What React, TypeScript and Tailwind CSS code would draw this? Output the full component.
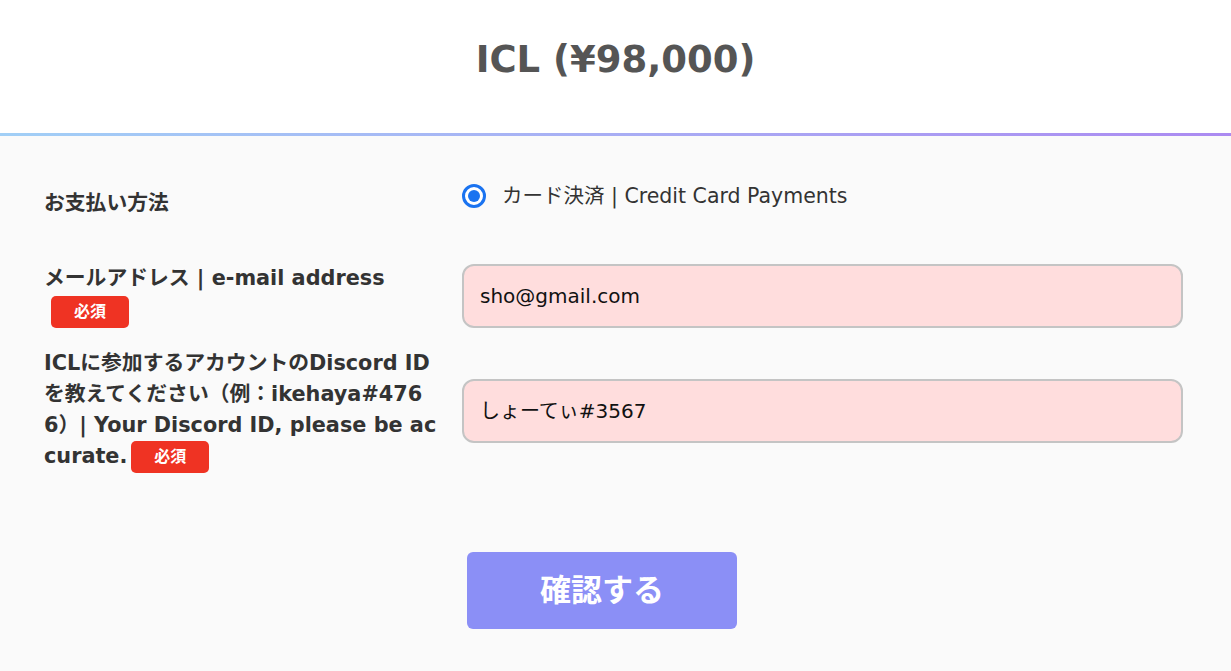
import React from "react";

const font = { fontFamily: '"DejaVu Sans", "Noto Sans CJK JP", sans-serif' };

function Badge() {
  return (
    <span className="inline-flex items-center justify-center w-[78px] h-[32px] rounded-[5px] bg-[#ef3323] text-white text-[16px] font-bold leading-none align-middle">
      必須
    </span>
  );
}

export default function App() {
  return (
    <div className="min-h-screen bg-[#fafafa] text-[#333]" style={font}>
      <header className="bg-white h-[133px] flex items-center justify-center">
        <h1 className="text-[37px] font-bold text-[#555] leading-none -mt-[14px]">ICL (¥98,000)</h1>
      </header>
      <div className="h-[3px] bg-gradient-to-r from-[#a1cff6] to-[#ab8af1]" />
      <main className="pl-[44px] pr-[48px] pt-[44px]">
        <div className="grid grid-cols-[418px_1fr]">
          {/* Row 1 */}
          <div className="pt-[8px] text-[20.8px] font-bold leading-[31px]">お支払い方法</div>
          <div className="flex items-center h-[32px] gap-[16px]">
            <span className="w-[24px] h-[24px] rounded-full border-[3px] border-[#1a73f0] bg-white flex items-center justify-center">
              <span className="w-[12px] h-[12px] rounded-full bg-[#1a73f0]" />
            </span>
            <span className="text-[20.5px] text-[#333] leading-none">カード決済 | Credit Card Payments</span>
          </div>

          {/* Row 2 */}
          <div className="mt-[44px] text-[20.8px] font-bold leading-[31px] self-center">
            <div className="whitespace-nowrap">メールアドレス | e-mail address</div>
            <div className="ml-[7px] mt-[2px]"><Badge /></div>
          </div>
          <div className="mt-[44px] self-center">
            <div className="h-[64px] rounded-[12px] border-2 border-[#c4c4c4] bg-[#ffdddd] flex items-center px-[16px] text-[20px] text-[#111]">
              sho@gmail.com
            </div>
          </div>

          {/* Row 3 */}
          <div className="mt-[20px] text-[20.8px] font-bold leading-[31px] self-center">
            <div className="whitespace-nowrap">ICLに参加するアカウントのDiscord ID</div>
            <div className="whitespace-nowrap">を教えてください（例：ikehaya#476</div>
            <div className="whitespace-nowrap">6）| Your Discord ID, please be ac</div>
            <div className="whitespace-nowrap">
              curate.<span className="ml-[4px]"><Badge /></span>
            </div>
          </div>
          <div className="mt-[20px] self-center">
            <div className="h-[64px] rounded-[12px] border-2 border-[#c4c4c4] bg-[#ffdddd] flex items-center px-[16px] text-[20px] text-[#111]">
              しょーてぃ#3567
            </div>
          </div>

          {/* Button */}
          <div />
          <div className="mt-[79px] pl-[5px]">
            <button className="w-[270px] h-[77px] rounded-[6px] bg-[#8b8ff6] text-white text-[31px] font-bold leading-none">
              確認する
            </button>
          </div>
        </div>
      </main>
    </div>
  );
}
